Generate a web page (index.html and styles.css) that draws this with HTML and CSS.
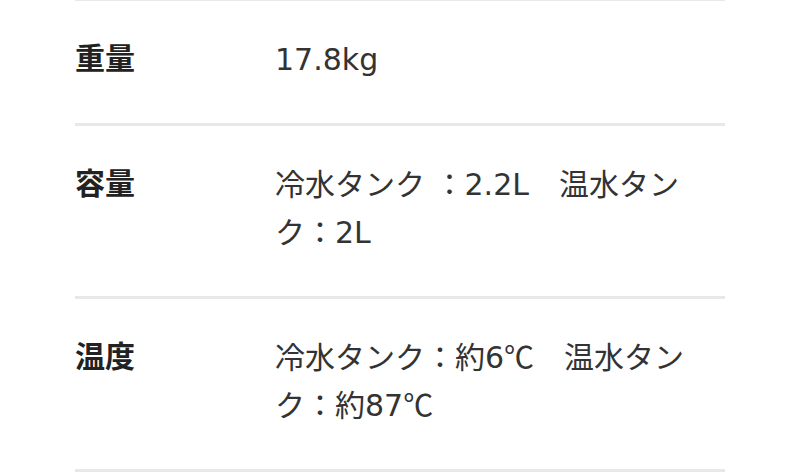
FILE: index.html
```html
<!DOCTYPE html>
<html lang="ja">
<head>
<meta charset="utf-8">
<link rel="stylesheet" href="styles.css">
</head>
<body>
<table class="spec">
  <tbody>
    <tr class="spec-row">
      <th class="spec-label">重量</th>
      <td class="spec-value">17.8kg</td>
    </tr>
    <tr class="spec-row">
      <th class="spec-label">容量</th>
      <td class="spec-value">冷水タンク ：2.2L　温水タンク：2L</td>
    </tr>
    <tr class="spec-row">
      <th class="spec-label">温度</th>
      <td class="spec-value">冷水タンク：約6<span class="cjk">℃</span>　温水タンク：約87<span class="cjk">℃</span></td>
    </tr>
  </tbody>
</table>
</body>
</html>
```

FILE: styles.css
```css
html, body {
  margin: 0;
  padding: 0;
  background: #ffffff;
}

body {
  font-family: "DejaVu Sans", "Noto Sans CJK JP", sans-serif;
  color: #333333;
}

.spec {
  margin: -2px 0 0 75px;
  width: 650px;
  border-collapse: collapse;
  table-layout: fixed;
}

.spec-row {
  border-top: 3px solid #e8e8e8;
  border-bottom: 3px solid #e8e8e8;
}

.spec-label,
.spec-value {
  padding: 35px 0 39px 0;
  font-size: 30px;
  line-height: 48px;
  text-align: left;
  vertical-align: top;
}

.spec-label {
  width: 200px;
  padding-top: 31px;
  font-family: "Noto Sans CJK JP", sans-serif;
  font-weight: 700;
  color: #222222;
}

.spec-value {
  font-weight: 400;
  padding-right: 24px;
}

.cjk {
  font-family: "Noto Sans CJK JP", sans-serif;
  line-height: 1;
}
```
